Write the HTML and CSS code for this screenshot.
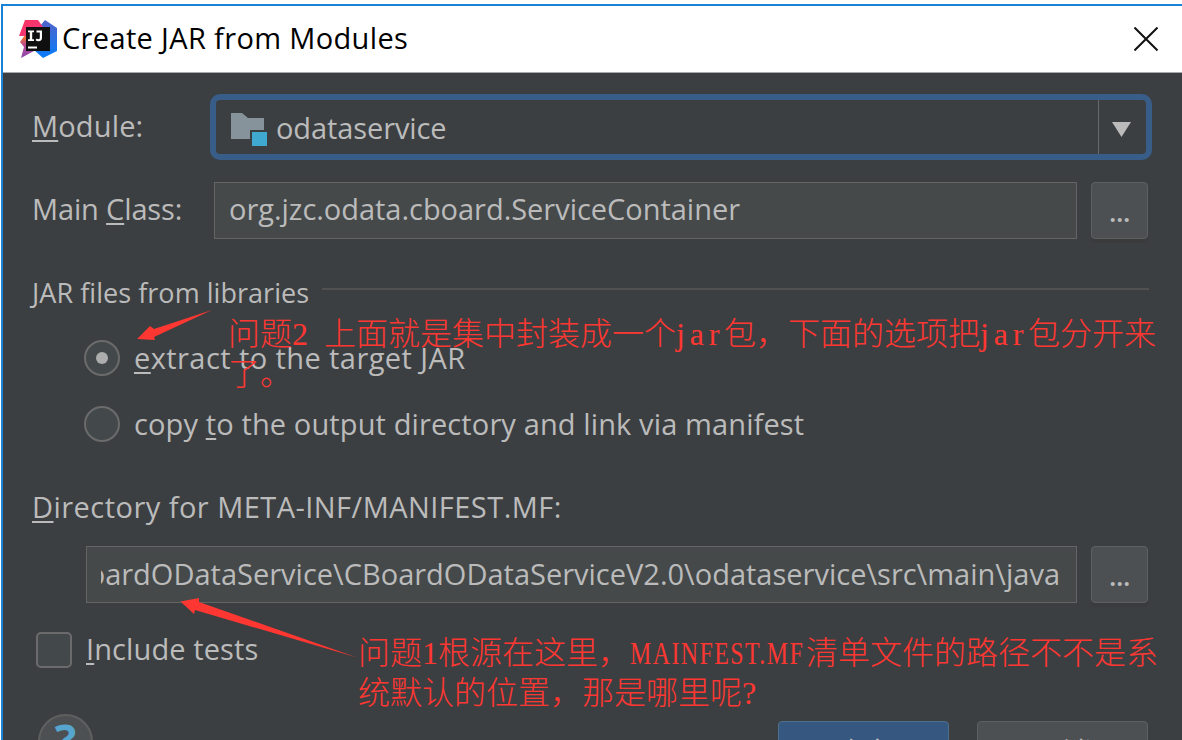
FILE: index.html
```html
<!DOCTYPE html>
<html lang="zh-CN">
<head>
<meta charset="utf-8">
<title>Create JAR from Modules</title>
<link rel="stylesheet" href="styles.css">
</head>
<body>
<div class="window">
  <header class="titlebar">
    <svg class="logo" width="38" height="38" viewBox="0 0 38 38">
      <defs>
        <linearGradient id="lr" x1="0" y1="0" x2="1" y2="1"><stop offset="0" stop-color="#fe315d"/><stop offset="1" stop-color="#e93a83"/></linearGradient>
        <linearGradient id="lb" x1="0" y1="0" x2="0" y2="1"><stop offset="0" stop-color="#5063c8"/><stop offset="1" stop-color="#087cfa"/></linearGradient>
        <linearGradient id="lp" x1="0" y1="0" x2="0" y2="1"><stop offset="0" stop-color="#f97a12"/><stop offset=".45" stop-color="#b84a96"/><stop offset="1" stop-color="#8a4bb0"/></linearGradient>
      </defs>
      <path d="M6 15L1 22l4 5-3 11 13-7V15z" fill="url(#lp)"/>
      <path d="M26 0l12 8v23l-14 7-9-8 6-24z" fill="url(#lb)"/>
      <path d="M6 0h13l5 7v9H0z" fill="url(#lr)"/>
      <path d="M7 7h24v24H7z" fill="#101010"/>
      <path d="M9 26.500h9v2H9zM9 10.500h6v1.800h-1.800v6.900H15V21H9v-1.800h1.800v-6.900H9zM17.500 10.500H23v7q0 3.800-3.500 3.800-2 0-3-1.300l1.300-1.500q1.500 1.400 2.700.3.300-.4.300-1.500v-4.900h-3.300z" fill="#fff"/>
    </svg>
    <h1 class="title">Create JAR from Modules</h1>
    <svg class="close" width="24" height="24" viewBox="0 0 24 24"><path d="M.5.500l23 23M23.500.500l-23 23" stroke="#111" stroke-width="2" fill="none"/></svg>
  </header>
  <main class="form">
    <div class="row module-row">
      <label class="label"><u>M</u>odule:</label>
      <div class="combo">
        <svg class="folder" width="37" height="34" viewBox="0 0 37 34"><path d="M0 0h11l6 5h16v12H19v9H0z" fill="#87939a"/><path d="M21 19h15v14H21z" fill="#40a9d0"/></svg>
        <span class="combo-text">odataservice</span>
        <span class="combo-arrow"><svg width="19" height="15" viewBox="0 0 19 15"><path d="M0 0h19L9.500 15z" fill="#bbb"/></svg></span>
      </div>
    </div>
    <div class="row class-row">
      <label class="label label-class">Main <u>C</u>lass:</label>
      <div class="field"><span>org.jzc.odata.cboard.ServiceContainer</span></div>
      <button class="browse">...</button>
    </div>
    <div class="group"><span class="group-title">JAR files from libraries</span><i class="rule"></i></div>
    <div class="option first"><span class="radio"><i class="dot"></i></span><span class="t-extract"><u>e</u>xtract to the target JAR</span></div>
    <div class="option second"><span class="radio"></span><span class="t-copy">copy <u>t</u>o the output directory and link via manifest</span></div>
    <div class="dir-label"><u>D</u>irectory for META-INF/MANIFEST.MF:</div>
    <div class="row path-row">
      <div class="field path"><div class="clip"><span>boardODataService\CBoardODataServiceV2.0\odataservice\src\main\java</span></div></div>
      <button class="browse">...</button>
    </div>
    <div class="check-row"><span class="checkbox"></span><span class="t-include"><u>I</u>nclude tests</span></div>
    <footer class="footer">
      <span class="help">?</span>
      <button class="action primary">确定</button>
      <button class="action">取消</button>
    </footer>
  </main>
</div>
<svg class="arrows" width="1182" height="740" viewBox="0 0 1182 740"><path d="M137 339L150 326l4 3 58-19-58 27 1 3zM180.500 601.500L199 598v4l158 55.500-162-47.500-1 4z" fill="#ff3732"/></svg>
<p class="note note-two">问题<span class="digit">2</span><span class="gap"></span>上面就是集中封装成一个<span class="lower">jar</span>包，下面的选项把<span class="lower">jar</span>包分开来<br>了。</p>
<p class="note note-one">问题<span class="digit">1</span>根源在这里，<span class="upper">MAINFEST.MF</span>清单文件的路径不不是系<br>统默认的位置，那是哪里呢<span class="digit">?</span></p>
</body>
</html>
```
FILE: styles.css
```css
* { box-sizing: border-box; }
body { margin: 0; height: 740px; overflow: hidden; background: #fff; position: relative; font-family: "Open Sans", "Noto Sans CJK SC", sans-serif; font-size: 29px; color: #bbb; display: flow-root; }
.window { margin: 4px 0 0 1px; border-top: 2px solid #1883d7; border-left: 2px solid #1883d7; height: 736px; overflow: hidden; background: #3c3f41; white-space: nowrap; }
.titlebar { height: 67px; background: #fff; border-bottom: 1px solid #aaa; display: flex; align-items: center; padding: 0 24px 0 16px; color: #000; }
.logo { margin-top: -1px; }
.title { font: inherit; margin: -3px auto 0 5px; letter-spacing: .35px; }
.close { margin-top: -1px; }
.form { padding-left: 29px; line-height: 40px; }
u { text-decoration-thickness: 2px; text-underline-offset: 3px; text-decoration-skip-ink: none; }
.row { display: flex; }
.module-row { margin-top: 21px; height: 66px; }
.label { width: 178px; line-height: 64px; letter-spacing: .15px; }
.label-class { width: 182px; line-height: 55px; letter-spacing: -.15px; }
.combo { width: 942px; border: 6px solid #385d88; border-radius: 10px; display: flex; align-items: center; padding-left: 15px; }
.folder { margin-top: 5px; }
.combo-text { margin-left: 8px; margin-top: 2px; letter-spacing: -.1px; }
.combo-arrow { margin-left: auto; width: 48px; height: 54px; border-left: 1px solid #666869; display: flex; align-items: center; padding-left: 13px; padding-top: 4px; }
.class-row { margin-top: 21px; height: 58px; }
.field { width: 863px; border: 1px solid #646464; background: #45494a; padding-left: 14px; line-height: 52px; height: 57px; margin-top: 1px; letter-spacing: -.03px; }
.path { width: 991px; margin-top: 0; padding-left: 14px; padding-right: 16px; line-height: 54px; letter-spacing: 0; }
.clip { overflow: hidden; display: flex; justify-content: flex-end; height: 54px; }
.browse { width: 57px; height: 57px; margin: 1px 0 0 14px; border: 1px solid #5e6060; border-radius: 4px; background: #4c5052; box-shadow: 0 4px 0 #393b3c; color: #bbb; font: 600 27px "Open Sans", sans-serif; letter-spacing: -.4px; padding: 2px 0 0; }
.path-row .browse { margin-top: 0; }
.group { margin-top: 34px; height: 40px; display: flex; }
.group-title { font-size: 27px; letter-spacing: .04px; }
.rule { height: 2px; flex: 1; margin: 15px 33px 0 13px; background: #515151; }
.option { display: flex; align-items: center; height: 36px; padding-left: 52px; gap: 14px; }
.first { margin-top: 27px; }
.t-extract { letter-spacing: .42px; }
.t-copy { letter-spacing: .12px; }
.second { margin-top: 30px; }
.radio { width: 36px; height: 36px; border: 2px solid #6b6b6b; border-radius: 50%; background: #43494a; display: flex; align-items: center; justify-content: center; }
.dot { width: 12px; height: 12px; border-radius: 50%; background: #adadad; }
.dir-label { margin-top: 45px; height: 40px; letter-spacing: .46px; }
.path-row { margin: 19px 0 0 54px; height: 58px; }
.check-row { margin: 28px 0 0 4px; height: 36px; display: flex; align-items: center; gap: 14px; }
.t-include { margin-top: -2px; letter-spacing: .1px; }
.checkbox { width: 36px; height: 36px; border: 2px solid #6b6b6b; border-radius: 5px; background: #43494a; }
.footer { margin-top: 46px; display: flex; padding-left: 6px; }
.help { width: 55px; height: 55px; border: 2px solid #5e6060; border-radius: 50%; background: #4c5052; color: #56a5cf; font-weight: 700; font-size: 45px; line-height: 48px; text-align: center; }
.action { width: 171px; height: 60px; margin: 7px 0 0 28px; border: 1px solid #5e6060; border-radius: 4px; background: #4c5052; color: #bbb; font: 29px/58px "Noto Sans CJK SC", sans-serif; padding: 0; }
.primary { margin-left: 685px; background: #365880; border-color: #4c708c; }
.arrows { position: absolute; left: 0; top: 0; }
.note { position: absolute; margin: 0; color: #ff3732; font: 300 32px/40px "Noto Sans CJK SC", sans-serif; white-space: nowrap; }
.digit, .lower, .upper { font-family: "Liberation Serif", serif; line-height: 0; }
.gap { display: inline-block; width: 16px; }
.lower { letter-spacing: 4.750px; }
.upper { display: inline-block; width: 176px; font-size: 32px; letter-spacing: 2px; transform: scaleX(.745); transform-origin: left; }
.note-two { left: 228px; top: 311px; }
.note-one { left: 358px; top: 630px; }
```
